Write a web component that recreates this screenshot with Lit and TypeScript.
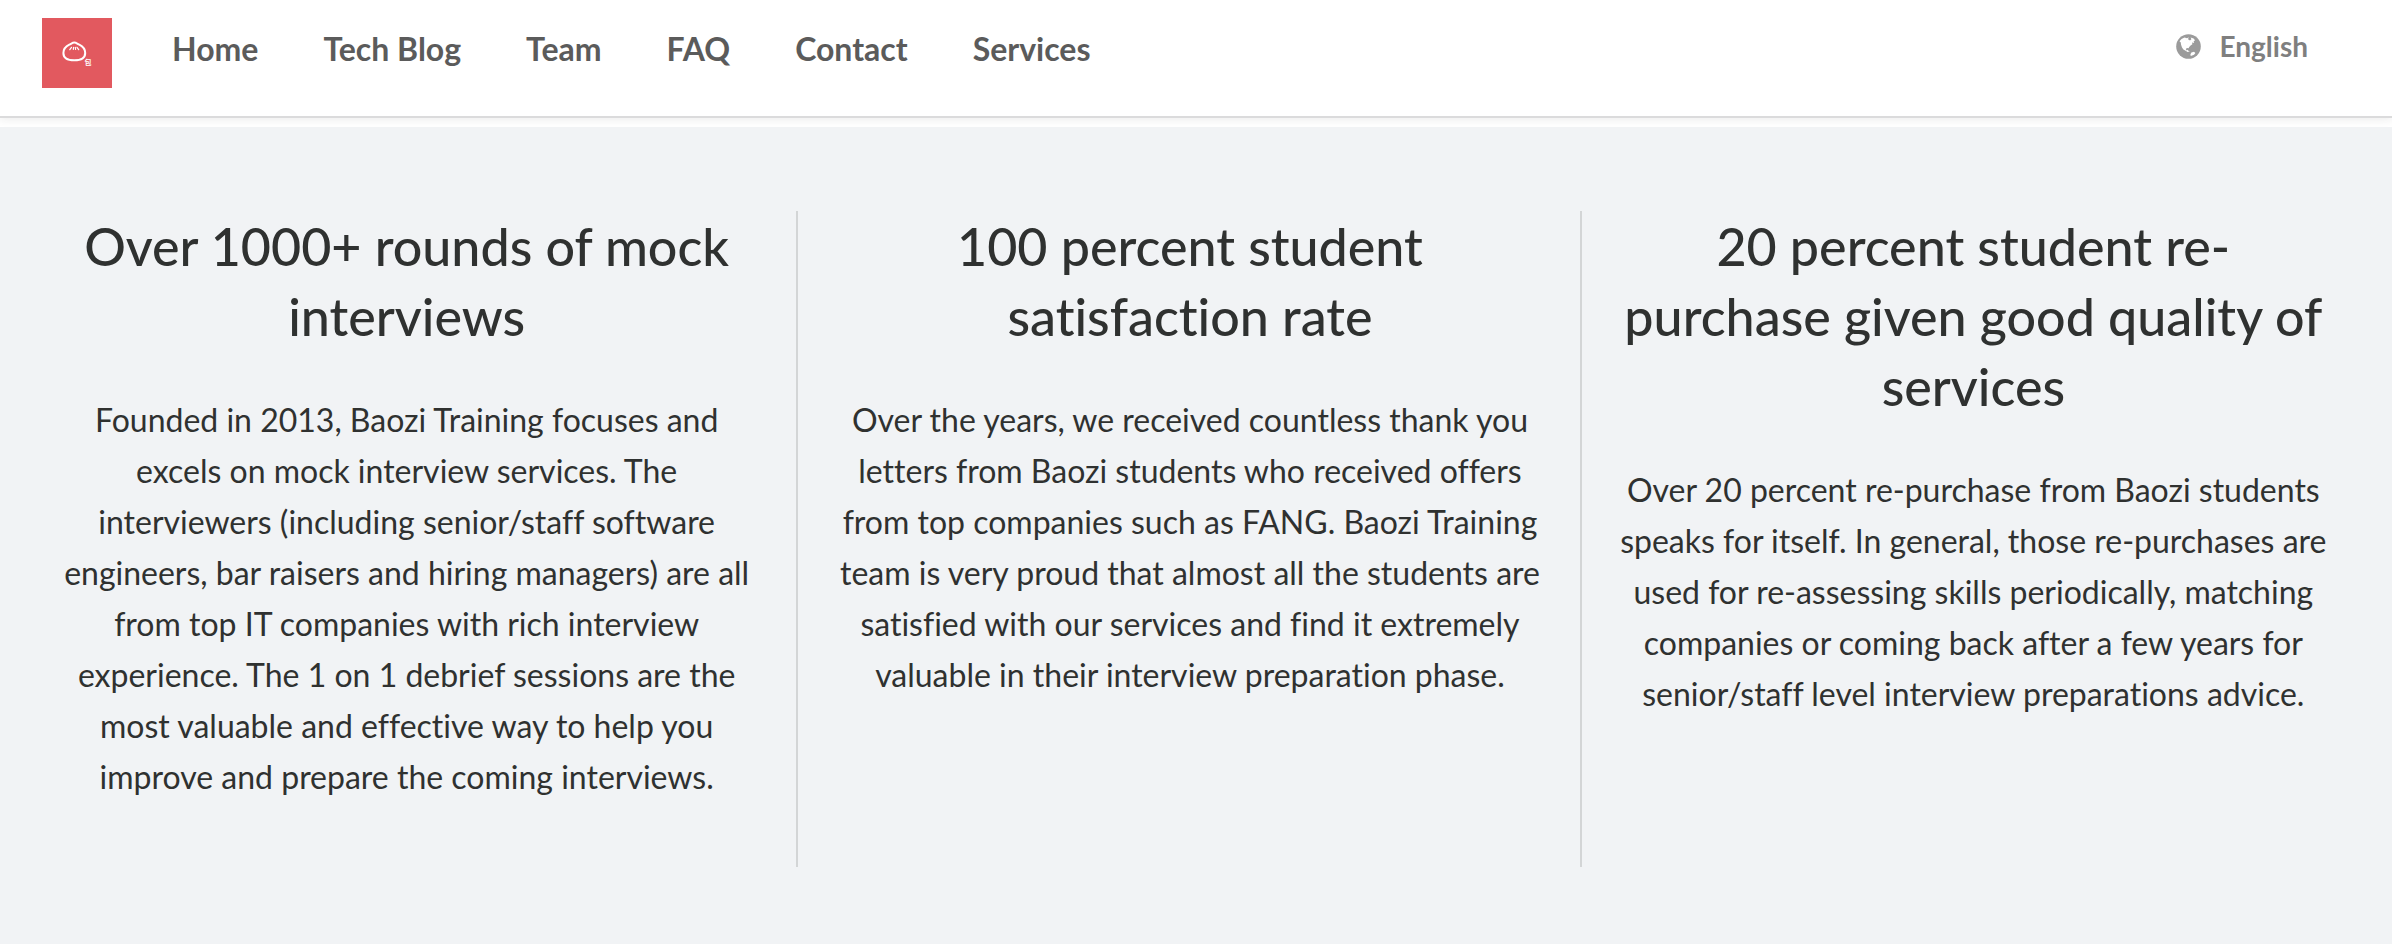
import { LitElement, html, css, svg } from "lit";
import { customElement } from "lit/decorators.js";

interface Feature {
  title: string;
  text: string;
}

const LINKS = ["Home", "Tech Blog", "Team", "FAQ", "Contact", "Services"];

const FEATURES: Feature[] = [
  {
    title: "Over 1000+ rounds of mock interviews",
    text: "Founded in 2013, Baozi Training focuses and excels on mock interview services. The interviewers (including senior/staff software engineers, bar raisers and hiring managers) are all from top IT companies with rich interview experience. The 1 on 1 debrief sessions are the most valuable and effective way to help you improve and prepare the coming interviews.",
  },
  {
    title: "100 percent student satisfaction rate",
    text: "Over the years, we received countless thank you letters from Baozi students who received offers from top companies such as FANG. Baozi Training team is very proud that almost all the students are satisfied with our services and find it extremely valuable in their interview preparation phase.",
  },
  {
    title: "20 percent student re-purchase given good quality of services",
    text: "Over 20 percent re-purchase from Baozi students speaks for itself. In general, those re-purchases are used for re-assessing skills periodically, matching companies or coming back after a few years for senior/staff level interview preparations advice.",
  },
];

// A steamed bun with three pleats and a small seal beside it.
const bun = svg`
  <g fill="none" stroke="#fff" stroke-linecap="round">
    <path stroke-width="2" d="M32.300 24.500c1.700 0 3 1.200 5 2.200 3.700 1.800 5.900 4.500 5.900 8.300 0 5-3.700 7.300-10.900 7.300s-10.900-2.300-10.900-7.300c0-3.800 2.200-6.500 5.900-8.300 2-1 3.300-2.200 5-2.200z"/>
    <path stroke-width="1.200" d="M29.500 29.300l-1.700 2.400M31.600 29.300l-.3 2M33.300 29.300l.3 2M35 29.300l1.700 2.400"/>
  </g>
  <text class="seal" x="42.500" y="46.500">包</text>`;

// A globe disc with the Americas side cut out in white.
const globe = svg`
  <circle cx="12.500" cy="12.500" r="12.300" fill="#9b9b9b"/>
  <path fill="#fff" d="M3.500 7.200L5.500 5 8.500 3.600 11 4.200 12.800 3.200 12 5.200 14 6.400 15.400 5.300 14.600 3.600 17.600 4.400 19 6.200 17.600 7.600 18.200 9 16 8.600 16.400 10.200 14.600 11.400 13.200 13 12.600 14.200 11 14 9.800 15 10.600 16.400 12 15.800 12.600 17.400 14.200 18 11.600 18 9.600 16.800 7.400 15.600 6 13.400 5 10.600 4.800 8.600z"/>
  <path fill="#fff" d="M15.400 18.600L18 17.800 19.400 19 18 20.800 14.800 22 14.400 20.600z"/>`;

@customElement("site-header")
export class SiteHeader extends LitElement {
  static styles = css`
    :host { display: block; }
    .bar {
      display: flex;
      align-items: flex-start;
      padding: 18px 84px 28px 42px;
      background: #fff;
      border-bottom: 2px solid #dbdbdc;
      box-shadow: 0 2px 8px rgba(34, 36, 38, 0.08);
    }
    .logo { display: block; width: 70px; height: 70px; background: #e2595f; }
    .logo svg { display: block; width: 70px; height: 70px; }
    .seal { fill: #fff; font: 700 7px "Noto Sans CJK SC", sans-serif; }
    .links { display: flex; gap: 65px; margin-left: 60px; }
    .links a {
      color: #5b5b5b;
      font-size: 32px;
      line-height: 40px;
      font-weight: 700;
      text-decoration: none;
      padding-top: 11px;
    }
    .language {
      display: flex;
      align-items: center;
      gap: 18px;
      margin: 10px 0 0 auto;
      padding: 0;
      border: 0;
      background: none;
      color: #7f7f7f;
      font: 700 28px/36px Lato, sans-serif;
    }
    .language svg { display: block; width: 25px; height: 25px; }
  `;

  render() {
    return html`
      <header class="bar">
        <a class="logo" href="#" aria-label="Baozi Training">
          <svg viewBox="0 0 70 70" aria-hidden="true">${bun}</svg>
        </a>
        <nav class="links">
          ${LINKS.map((label) => html`<a href="#">${label}</a>`)}
        </nav>
        <button class="language" type="button">
          <svg viewBox="0 0 25 25" aria-hidden="true">${globe}</svg>
          English
        </button>
      </header>
    `;
  }
}

@customElement("feature-columns")
export class FeatureColumns extends LitElement {
  static styles = css`
    :host { display: block; flex: 1; background: #f1f3f5; }
    .grid {
      display: grid;
      grid-template-columns: repeat(3, 1fr);
      margin: 84px 27px 77px 15px;
    }
    .column {
      padding: 0 38px 65px;
      text-align: center;
      color: #2f3130;
    }
    .column + .column { box-shadow: -2px 0 0 0 #d3d5d6; }
    h2 {
      margin: 0 0 43px;
      font-size: 52px;
      line-height: 70px;
      font-weight: 500;
    }
    p { margin: 0; font-size: 32px; line-height: 51px; }
  `;

  render() {
    return html`
      <section class="grid">
        ${FEATURES.map(
          (f) => html`<article class="column"><h2>${f.title}</h2><p>${f.text}</p></article>`
        )}
      </section>
    `;
  }
}

@customElement("app-root")
export class AppRoot extends LitElement {
  static styles = css`
    :host {
      display: flex;
      flex-direction: column;
      gap: 9px;
      min-height: 100vh;
      background: #fff;
      font-family: Lato, "Liberation Sans", sans-serif;
      font-variant-ligatures: none;
    }
  `;

  render() {
    return html`<site-header></site-header><feature-columns></feature-columns>`;
  }
}
